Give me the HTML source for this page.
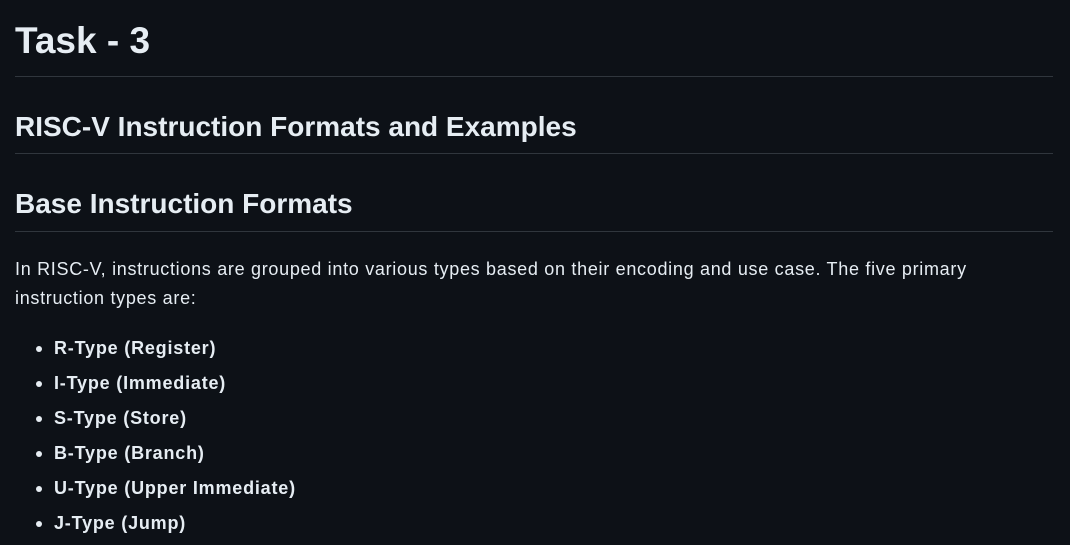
<!DOCTYPE html>
<html><head><meta charset="utf-8"><style>
html,body{margin:0;padding:0;background:#0d1117;width:1070px;height:545px;overflow:hidden}
body{font-family:"Liberation Sans",sans-serif;color:#e6edf3;position:relative}
.a{position:absolute;left:15px;white-space:nowrap}
.hr{position:absolute;left:15px;width:1038px;height:1px;background:#30363d}
.li{position:absolute;left:54px;font-weight:bold;font-size:18px;line-height:20px;letter-spacing:0.8px}
.li:before{content:"";position:absolute;left:-18px;top:8px;width:6px;height:6px;border-radius:50%;background:#e6edf3}
</style></head><body>
<div class="a" style="top:18px;font-size:37px;line-height:46px;font-weight:600">Task - 3</div>
<div class="hr" style="top:76px"></div>
<div class="a" style="top:110px;font-size:28px;line-height:34px;font-weight:600">RISC-V Instruction Formats and Examples</div>
<div class="hr" style="top:153px"></div>
<div class="a" style="top:187px;font-size:28px;line-height:34px;font-weight:600">Base Instruction Formats</div>
<div class="hr" style="top:231px"></div>
<div class="a" style="top:255px;font-size:18px;line-height:29px;letter-spacing:0.7px">In RISC-V, instructions are grouped into various types based on their encoding and use case. The five primary<br>instruction types are:</div>
<div class="li" style="top:338px">R-Type (Register)</div>
<div class="li" style="top:373px">I-Type (Immediate)</div>
<div class="li" style="top:408px">S-Type (Store)</div>
<div class="li" style="top:443px">B-Type (Branch)</div>
<div class="li" style="top:478px">U-Type (Upper Immediate)</div>
<div class="li" style="top:513px">J-Type (Jump)</div>
</body></html>
